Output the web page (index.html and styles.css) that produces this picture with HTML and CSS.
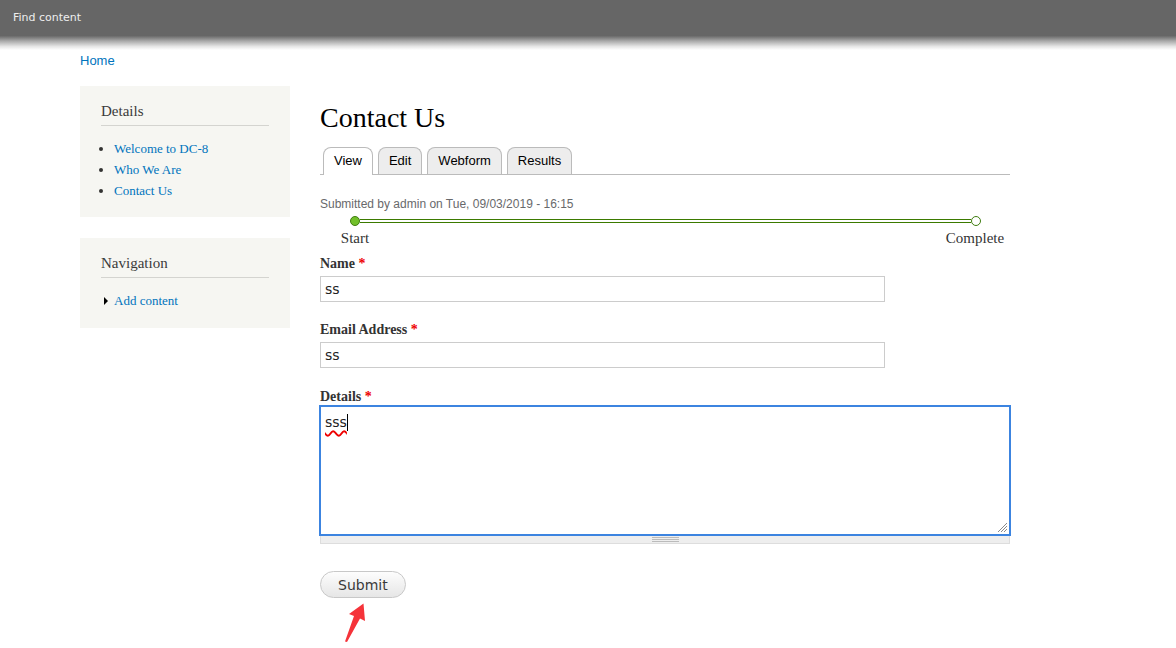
FILE: index.html
```html
<html>
  <head>
    <title>Contact Us | DC-8</title>
    <link rel="stylesheet" href="styles.css">
  </head>
  <body>
    <div id="toolbar">Find content</div>
    <div id="toolbar-shade"></div>
    <div id="page">
      <div class="breadcrumb"><a href="#">Home</a></div>
      <div id="columns">
        <div id="sidebar">
          <div class="block">
            <h2>Details</h2>
            <ul class="menu">
              <li><a href="#">Welcome to DC-8</a></li>
              <li><a href="#">Who We Are</a></li>
              <li><a href="#">Contact Us</a></li>
            </ul>
          </div>
          <div class="block">
            <h2>Navigation</h2>
            <ul class="menu collapsed">
              <li><a href="#">Add content</a></li>
            </ul>
          </div>
        </div>
        <div id="content">
          <h1>Contact Us</h1>
          <ul class="tabs">
            <li class="active"><a href="#">View</a></li>
            <li><a href="#">Edit</a></li>
            <li><a href="#">Webform</a></li>
            <li><a href="#">Results</a></li>
          </ul>
          <div class="submitted">Submitted by admin on Tue, 09/03/2019 - 16:15</div>
          <div class="progress">
            <div class="progress-track">
              <span class="dot done"></span>
              <span class="bar"></span>
              <span class="dot"></span>
            </div>
            <div class="progress-labels">
              <span>Start</span>
              <span>Complete</span>
            </div>
          </div>
          <form>
            <label class="first">Name <span class="req">*</span></label>
            <input type="text" class="text" value="ss">
            <label>Email Address <span class="req">*</span></label>
            <input type="text" class="text" value="ss">
            <label class="last">Details <span class="req">*</span></label>
            <div class="textarea"><span class="typed">sss</span><span class="caret"></span>
              <svg class="resizer" width="11" height="11" viewBox="0 0 11 11">
                <path d="M10 1L1 10M10 4L4 10M10 7L7 10" stroke="#8a8a8a" stroke-width="1"/>
              </svg>
            </div>
            <div class="grippie"><span></span></div>
            <div class="actions">
              <button type="button" class="button">Submit</button>
              <svg class="pointer" width="30" height="42" viewBox="0 0 30 42">
                <polygon points="23.5,1.5 25,19 20,16.5 7,40 5,39.5 14,14 9,12" fill="#f5333a"/>
              </svg>
            </div>
          </form>
        </div>
      </div>
    </div>
  </body>
</html>
```

FILE: styles.css
```css
body{
  margin:0;
  background:white;
  font-family:"Liberation Serif",serif;
}

a{
  color:#0074bd;
  text-decoration:none;
}

#toolbar{
  height:36px;
  padding-left:13px;
  background:#666;
  color:#eee;
  font-family:"DejaVu Sans",sans-serif;
  font-size:11px;
  line-height:36px;
}

#toolbar-shade{
  height:14px;
  background:linear-gradient(#6a6a6a,#a8a8a8 35%,#e6e6e6 75%,#fff);
}

#page{
  width:930px;
  margin-left:80px;
}

.breadcrumb{
  padding-top:3px;
  height:17px;
  font-family:"Liberation Sans",sans-serif;
  font-size:13px;
  line-height:16px;
}

#columns{
  display:flex;
  gap:30px;
  margin-top:16px;
}

#sidebar{
  width:210px;
  flex:none;
}

.block{
  background:#f6f6f2;
  padding:16px 21px 16px;
  margin-bottom:21px;
}

.block h2{
  margin:0;
  padding-bottom:5px;
  border-bottom:1px solid #d4d4d0;
  font-size:15px;
  line-height:18px;
  font-weight:normal;
  color:#3b3b3b;
}

.menu{
  margin:12px 0 0;
  padding-left:13px;
  font-size:13px;
  line-height:21px;
}

.menu li{
  color:#333;
}

.collapsed{
  margin-top:12px;
  padding-bottom:1px;
  list-style:none;
}

.collapsed li{
  position:relative;
}

.collapsed li:before{
  content:"";
  position:absolute;
  left:-10px;
  top:7px;
  border-left:4px solid #000;
  border-top:4px solid transparent;
  border-bottom:4px solid transparent;
}

#content{
  flex:1;
}

h1{
  margin:15px 0 0;
  font-size:28px;
  line-height:34px;
  font-weight:normal;
  color:#000;
}

.tabs{
  display:flex;
  gap:5px;
  height:27px;
  margin:12px 0 0;
  padding:0 0 0 3px;
  list-style:none;
  border-bottom:1px solid #bbb;
  font-family:"Liberation Sans",sans-serif;
  font-size:13px;
}

.tabs a{
  display:block;
  height:26px;
  padding:0 10px;
  line-height:26px;
  color:#000;
  background:#ededed;
  border:1px solid #bbb;
  border-bottom:none;
  border-radius:8px 8px 0 0;
}

.tabs .active a{
  height:27px;
  background:white;
}

.submitted{
  margin-top:21px;
  font-family:"Liberation Sans",sans-serif;
  font-size:12px;
  line-height:16px;
  color:#68696b;
}

.progress{
  margin-top:4px;
}

.progress-track{
  display:flex;
  align-items:center;
  margin:0 29px 0 30px;
}

.dot{
  width:8px;
  height:8px;
  border:1px solid #3f7d10;
  border-radius:50%;
  background:white;
  flex:none;
}

.dot.done{
  background:#72c02a;
}

.bar{
  flex:1;
  height:2px;
  border-top:1px solid #3b7a00;
  border-bottom:1px solid #3b7a00;
  background:white;
}

.progress-labels{
  display:flex;
  justify-content:space-between;
  margin-top:3px;
  font-size:15px;
  line-height:18px;
  color:#333;
}

.progress-labels span{
  width:70px;
  text-align:center;
}

form{
  margin:0;
}

label{
  display:block;
  margin-top:19px;
  font-size:14px;
  line-height:18px;
  font-weight:bold;
  color:#333;
}

label.first{
  margin-top:8px;
}

label.last{
  margin-top:20px;
}

.req{
  color:#e00;
}

.text{
  display:block;
  box-sizing:border-box;
  width:565px;
  height:26px;
  margin:3px 0 0;
  padding:0 4px;
  border:1px solid #ccc;
  font-family:"DejaVu Sans",sans-serif;
  font-size:14px;
  color:#222;
  outline:none;
}

.textarea{
  position:relative;
  box-sizing:border-box;
  height:131px;
  margin:-1px -1px 0;
  padding:6px 4px;
  border:2px solid #3c84e0;
  font-family:"DejaVu Sans",sans-serif;
  font-size:14px;
  line-height:18px;
  color:#222;
}

.typed{
  text-decoration:underline wavy #e00;
  text-decoration-thickness:1.5px;
  text-underline-offset:3px;
}

.caret{
  display:inline-block;
  width:1px;
  height:17px;
  vertical-align:-4px;
  background:#000;
}

.resizer{
  position:absolute;
  right:1px;
  bottom:1px;
}

.grippie{
  display:flex;
  justify-content:center;
  align-items:center;
  box-sizing:border-box;
  height:8px;
  background:#eee;
  border:1px solid #ddd;
  border-top:none;
}

.grippie span{
  width:27px;
  height:5px;
  background:repeating-linear-gradient(#bbb 0 1px,transparent 1px 2px);
}

.actions{
  position:relative;
  margin-top:27px;
}

.button{
  height:27px;
  padding:0 17px;
  border:1px solid #c8c8c8;
  border-radius:14px;
  background:linear-gradient(#fdfdfd,#e6e6e6);
  font-family:"DejaVu Sans",sans-serif;
  font-size:14px;
  color:#3a3a3a;
}

.pointer{
  position:absolute;
  left:20px;
  top:31px;
}
```
